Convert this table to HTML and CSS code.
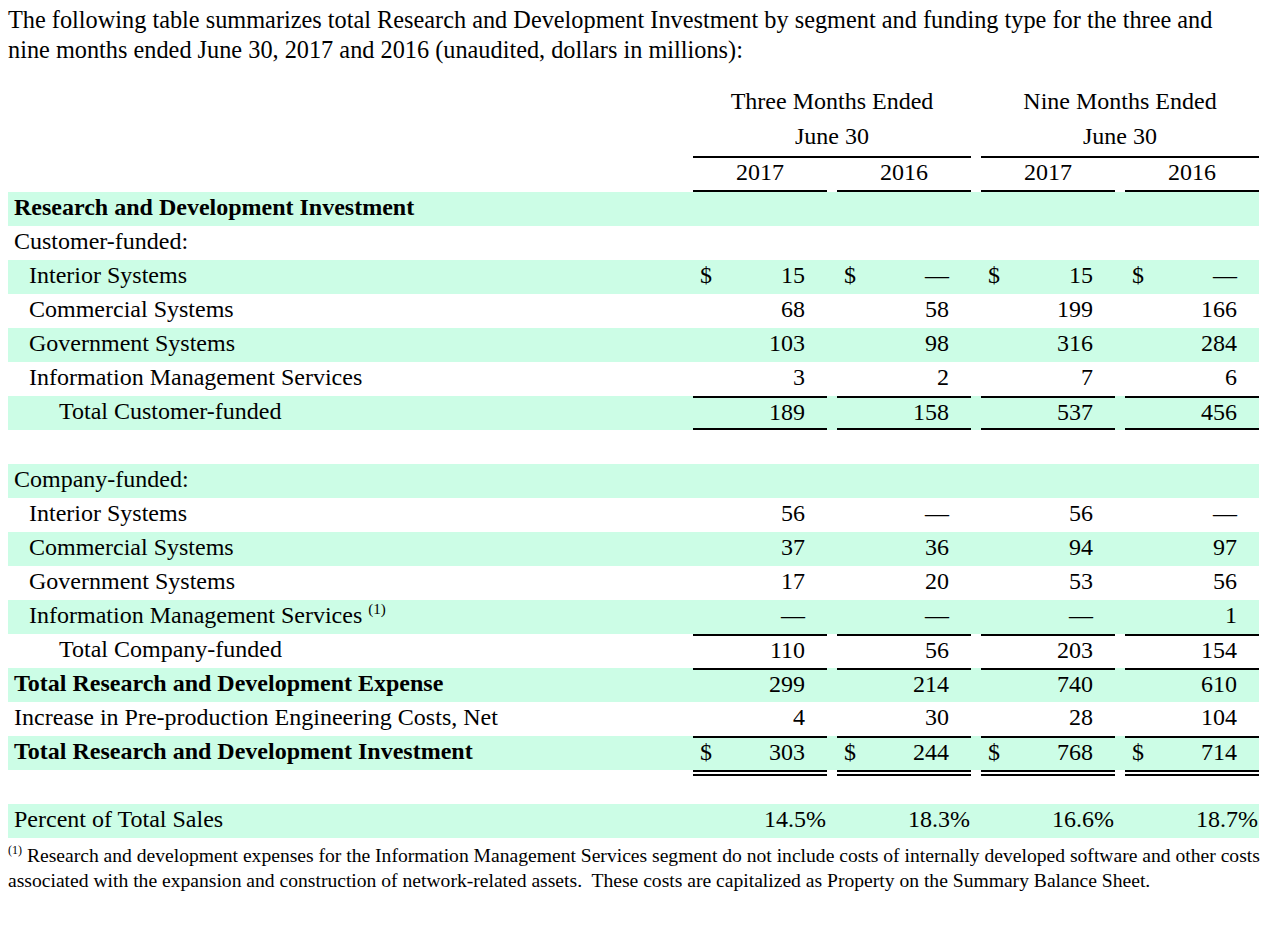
FILE: index.html
```html
<!DOCTYPE html>
<html lang="en">
<head>
<meta charset="utf-8">
<title>Research and Development Investment</title>
<link rel="stylesheet" href="styles.css">
</head>
<body>
<p class="intro">The following table summarizes total Research and Development Investment by segment and funding type for the three and nine months ended June 30, 2017 and 2016 (unaudited, dollars in millions):</p>
<table class="fin">
  <colgroup>
    <col class="c-label"><col class="c-num"><col class="c-num"><col class="c-num"><col class="c-last">
  </colgroup>
  <thead>
    <tr class="h1">
      <th></th>
      <th colspan="2" class="grp"><div class="hv">Three Months Ended</div></th>
      <th colspan="2" class="grp last"><div class="hv">Nine Months Ended</div></th>
    </tr>
    <tr class="h2">
      <th></th>
      <th colspan="2" class="grp"><div class="hv ul">June 30</div></th>
      <th colspan="2" class="grp last"><div class="hv ul">June 30</div></th>
    </tr>
    <tr class="h3">
      <th></th>
      <th class="n"><div class="hv ul">2017</div></th>
      <th class="n"><div class="hv ul">2016</div></th>
      <th class="n"><div class="hv ul">2017</div></th>
      <th class="n last"><div class="hv ul">2016</div></th>
    </tr>
  </thead>
  <tbody>
    <tr class="g">
      <td class="lbl b">Research and Development Investment</td>
      <td class="n"><div class="v"></div></td><td class="n"><div class="v"></div></td><td class="n"><div class="v"></div></td><td class="n last"><div class="v"></div></td>
    </tr>
    <tr>
      <td class="lbl">Customer-funded:</td>
      <td class="n"><div class="v"></div></td><td class="n"><div class="v"></div></td><td class="n"><div class="v"></div></td><td class="n last"><div class="v"></div></td>
    </tr>
    <tr class="g">
      <td class="lbl i1">Interior Systems</td>
      <td class="n"><div class="v"><span class="cur">$</span><span class="amt">15</span></div></td>
      <td class="n"><div class="v"><span class="cur">$</span><span class="amt">—</span></div></td>
      <td class="n"><div class="v"><span class="cur">$</span><span class="amt">15</span></div></td>
      <td class="n last"><div class="v"><span class="cur">$</span><span class="amt">—</span></div></td>
    </tr>
    <tr>
      <td class="lbl i1">Commercial Systems</td>
      <td class="n"><div class="v"><span class="amt">68</span></div></td>
      <td class="n"><div class="v"><span class="amt">58</span></div></td>
      <td class="n"><div class="v"><span class="amt">199</span></div></td>
      <td class="n last"><div class="v"><span class="amt">166</span></div></td>
    </tr>
    <tr class="g">
      <td class="lbl i1">Government Systems</td>
      <td class="n"><div class="v"><span class="amt">103</span></div></td>
      <td class="n"><div class="v"><span class="amt">98</span></div></td>
      <td class="n"><div class="v"><span class="amt">316</span></div></td>
      <td class="n last"><div class="v"><span class="amt">284</span></div></td>
    </tr>
    <tr>
      <td class="lbl i1">Information Management Services</td>
      <td class="n"><div class="v"><span class="amt">3</span></div></td>
      <td class="n"><div class="v"><span class="amt">2</span></div></td>
      <td class="n"><div class="v"><span class="amt">7</span></div></td>
      <td class="n last"><div class="v"><span class="amt">6</span></div></td>
    </tr>
    <tr class="g">
      <td class="lbl i2">Total Customer-funded</td>
      <td class="n"><div class="v bt bb"><span class="amt">189</span></div></td>
      <td class="n"><div class="v bt bb"><span class="amt">158</span></div></td>
      <td class="n"><div class="v bt bb"><span class="amt">537</span></div></td>
      <td class="n last"><div class="v bt bb"><span class="amt">456</span></div></td>
    </tr>
    <tr class="spacer">
      <td class="lbl"></td>
      <td class="n"><div class="v"></div></td><td class="n"><div class="v"></div></td><td class="n"><div class="v"></div></td><td class="n last"><div class="v"></div></td>
    </tr>
    <tr class="g">
      <td class="lbl">Company-funded:</td>
      <td class="n"><div class="v"></div></td><td class="n"><div class="v"></div></td><td class="n"><div class="v"></div></td><td class="n last"><div class="v"></div></td>
    </tr>
    <tr>
      <td class="lbl i1">Interior Systems</td>
      <td class="n"><div class="v"><span class="amt">56</span></div></td>
      <td class="n"><div class="v"><span class="amt">—</span></div></td>
      <td class="n"><div class="v"><span class="amt">56</span></div></td>
      <td class="n last"><div class="v"><span class="amt">—</span></div></td>
    </tr>
    <tr class="g">
      <td class="lbl i1">Commercial Systems</td>
      <td class="n"><div class="v"><span class="amt">37</span></div></td>
      <td class="n"><div class="v"><span class="amt">36</span></div></td>
      <td class="n"><div class="v"><span class="amt">94</span></div></td>
      <td class="n last"><div class="v"><span class="amt">97</span></div></td>
    </tr>
    <tr>
      <td class="lbl i1">Government Systems</td>
      <td class="n"><div class="v"><span class="amt">17</span></div></td>
      <td class="n"><div class="v"><span class="amt">20</span></div></td>
      <td class="n"><div class="v"><span class="amt">53</span></div></td>
      <td class="n last"><div class="v"><span class="amt">56</span></div></td>
    </tr>
    <tr class="g">
      <td class="lbl i1">Information Management Services <sup class="fn">(1)</sup></td>
      <td class="n"><div class="v"><span class="amt">—</span></div></td>
      <td class="n"><div class="v"><span class="amt">—</span></div></td>
      <td class="n"><div class="v"><span class="amt">—</span></div></td>
      <td class="n last"><div class="v"><span class="amt">1</span></div></td>
    </tr>
    <tr>
      <td class="lbl i2">Total Company-funded</td>
      <td class="n"><div class="v bt"><span class="amt">110</span></div></td>
      <td class="n"><div class="v bt"><span class="amt">56</span></div></td>
      <td class="n"><div class="v bt"><span class="amt">203</span></div></td>
      <td class="n last"><div class="v bt"><span class="amt">154</span></div></td>
    </tr>
    <tr class="g">
      <td class="lbl b">Total Research and Development Expense</td>
      <td class="n"><div class="v bt"><span class="amt">299</span></div></td>
      <td class="n"><div class="v bt"><span class="amt">214</span></div></td>
      <td class="n"><div class="v bt"><span class="amt">740</span></div></td>
      <td class="n last"><div class="v bt"><span class="amt">610</span></div></td>
    </tr>
    <tr>
      <td class="lbl">Increase in Pre-production Engineering Costs, Net</td>
      <td class="n"><div class="v"><span class="amt">4</span></div></td>
      <td class="n"><div class="v"><span class="amt">30</span></div></td>
      <td class="n"><div class="v"><span class="amt">28</span></div></td>
      <td class="n last"><div class="v"><span class="amt">104</span></div></td>
    </tr>
    <tr class="g">
      <td class="lbl b">Total Research and Development Investment</td>
      <td class="n"><div class="v bt"><span class="cur">$</span><span class="amt">303</span></div></td>
      <td class="n"><div class="v bt"><span class="cur">$</span><span class="amt">244</span></div></td>
      <td class="n"><div class="v bt"><span class="cur">$</span><span class="amt">768</span></div></td>
      <td class="n last"><div class="v bt"><span class="cur">$</span><span class="amt">714</span></div></td>
    </tr>
    <tr class="spacer">
      <td class="lbl"></td>
      <td class="n"><div class="v dbl"></div></td>
      <td class="n"><div class="v dbl"></div></td>
      <td class="n"><div class="v dbl"></div></td>
      <td class="n last"><div class="v dbl"></div></td>
    </tr>
    <tr class="g">
      <td class="lbl">Percent of Total Sales</td>
      <td class="n"><div class="v pct"><span class="amt">14.5%</span></div></td>
      <td class="n"><div class="v pct"><span class="amt">18.3%</span></div></td>
      <td class="n"><div class="v pct"><span class="amt">16.6%</span></div></td>
      <td class="n last"><div class="v pct"><span class="amt">18.7%</span></div></td>
    </tr>
  </tbody>
</table>
<p class="note"><sup class="nref">(1)</sup> Research and development expenses for the Information Management Services segment do not include costs of internally developed software and other costs associated with the expansion and construction of network-related assets.&nbsp; These costs are capitalized as Property on the Summary Balance Sheet.</p>
</body>
</html>
```
FILE: styles.css
```css
html, body {
  background: #ffffff;
}

body {
  margin: 0;
  padding: 0 8px;
  font-family: "Liberation Serif", "Times New Roman", serif;
  font-size: 24px;
  color: #000000;
}

.intro {
  margin: 5px 0 0;
  line-height: 30px;
  width: 1218px;
  font-size: 24.3px;
}

.fin {
  margin-top: 21px;
  border-collapse: separate;
  border-spacing: 0;
  table-layout: fixed;
  width: 1251px;
}

.c-label { width: 680px; }
.c-num { width: 144px; }
.c-last { width: 139px; }

.fin th {
  font-weight: normal;
  padding: 0;
}

.fin td {
  padding: 0;
}

.grp {
  padding: 0 5px !important;
  text-align: center;
}

.grp.last {
  padding-right: 0 !important;
}

.fin .n {
  padding: 0 5px;
}

.fin .n.last {
  padding-right: 0;
}

.hv {
  text-align: center;
  line-height: 31px;
  height: 31px;
  padding-bottom: 4px;
}

.h3 .hv {
  line-height: 29px;
  height: 29px;
  padding-bottom: 3px;
}

.hv.ul {
  border-bottom: 2px solid #000000;
}

.fin tbody tr {
  height: 34px;
}

.fin tr.g {
  background: #ccfde6;
}

.lbl {
  line-height: 31px;
  padding-bottom: 3px !important;
  padding-left: 6px !important;
  white-space: nowrap;
}

.lbl.i1 {
  padding-left: 21px !important;
}

.lbl.i2 {
  padding-left: 51px !important;
}

.lbl.b {
  font-weight: bold;
}

.v {
  height: 34px;
  box-sizing: border-box;
  display: flex;
  align-items: center;
  padding: 0 22px 3px 7px;
}

.v .amt {
  margin-left: auto;
}

.v.bt {
  border-top: 2px solid #000000;
}

.v.bt.bb {
  border-bottom: 2px solid #000000;
  padding-bottom: 2px;
}

.v.dbl {
  border-top: 6px double #000000;
}

.v.pct {
  padding-right: 1px;
}

.fn {
  font-size: 15px;
  line-height: 0;
  vertical-align: 9px;
}

.note {
  margin: 5px 0 0;
  font-size: 19.6px;
  line-height: 25px;
  width: 1256px;
}

.nref {
  font-size: 12px;
  line-height: 0;
  vertical-align: 8px;
}
```
